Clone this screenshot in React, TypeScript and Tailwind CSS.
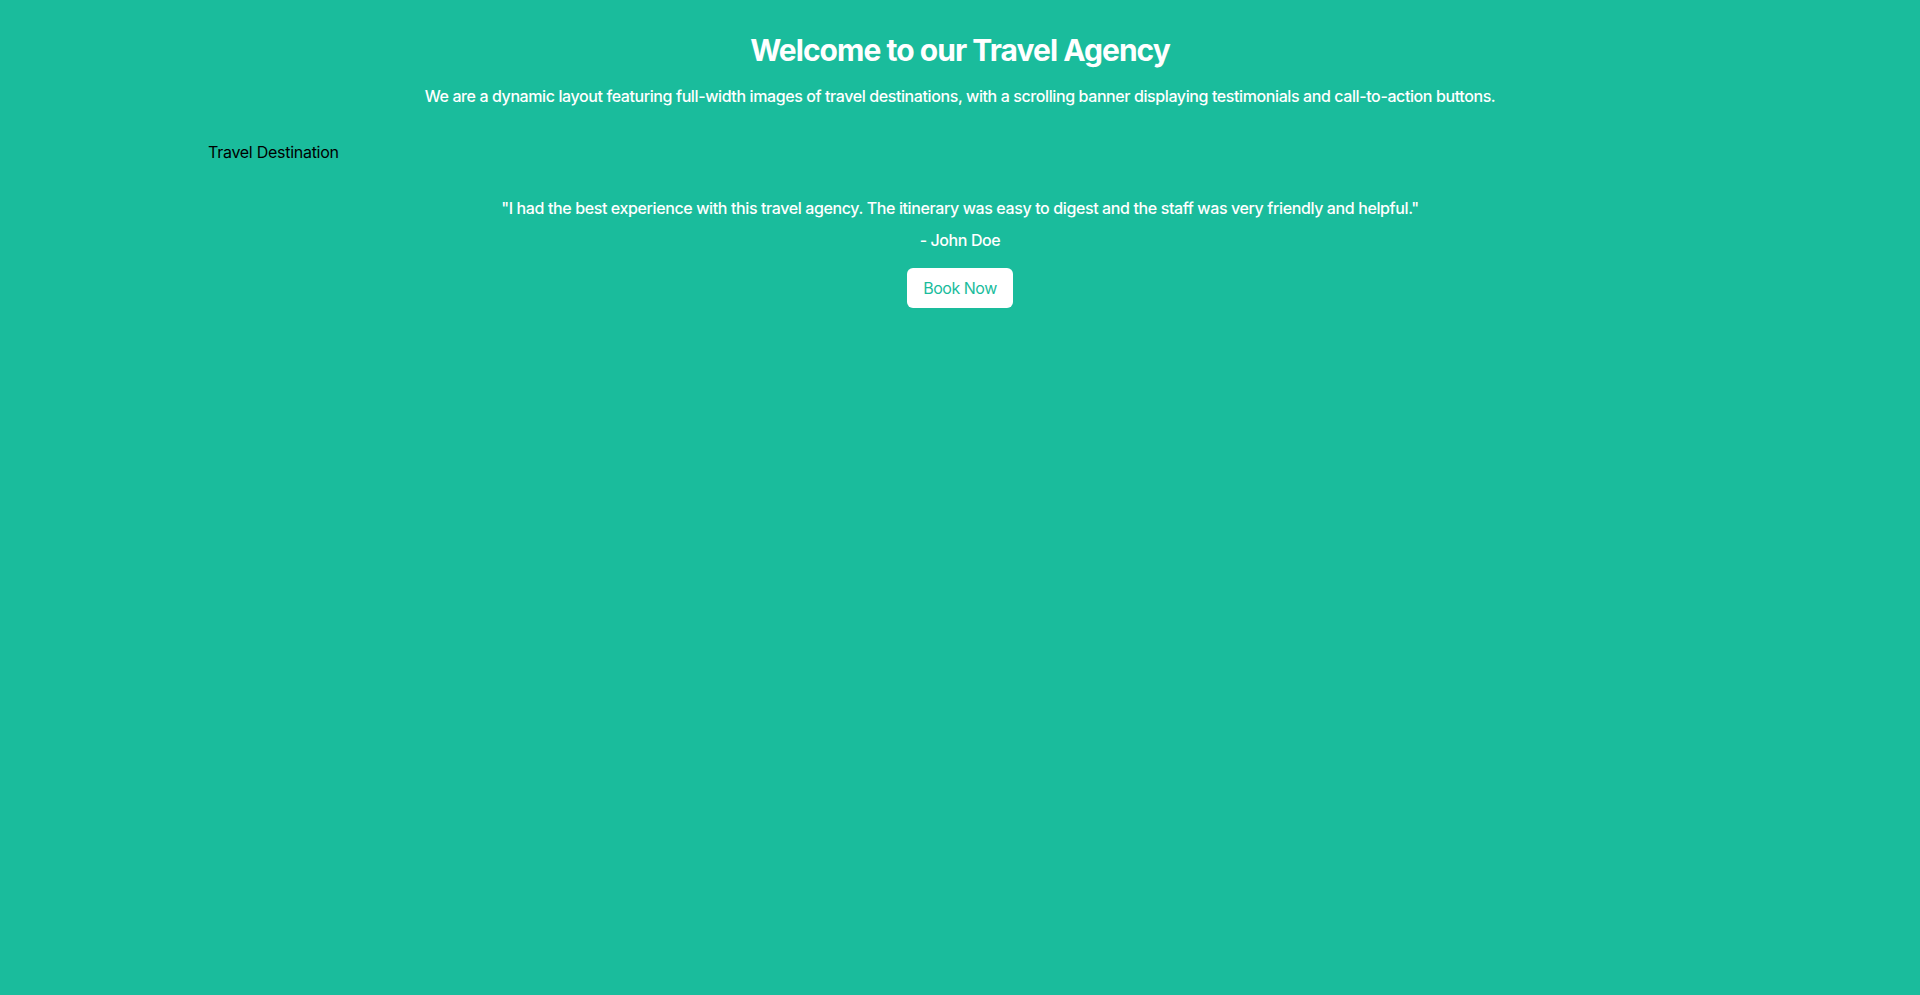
const App = () => {
  return (
    <div className="min-h-screen bg-[#1abc9c] font-['Inter',sans-serif]">
      <div className="container mx-auto px-4 py-8">
        <h1 className="text-center text-3xl font-bold tracking-[-0.032em] text-white">Welcome to our Travel Agency</h1>
        <p className="mt-4 text-center font-medium tracking-[-0.025em] text-white">
          We are a dynamic layout featuring full-width images of travel destinations, with a scrolling banner displaying
          testimonials and call-to-action buttons.
        </p>

        <div className="mt-8 tracking-[-0.017em] text-black">Travel Destination</div>

        <section className="mt-8 text-center">
          <p className="font-medium tracking-[-0.024em] text-white">
            "I had the best experience with this travel agency. The itinerary was easy to digest and the staff was very
            friendly and helpful."
          </p>
          <p className="mt-2 font-medium tracking-[-0.025em] text-white">- John Doe</p>
          <button className="mt-4 rounded-md bg-white px-4 py-2 tracking-[-0.03em] text-[#1abc9c]">Book Now</button>
        </section>
      </div>
    </div>
  );
};

export default App;
